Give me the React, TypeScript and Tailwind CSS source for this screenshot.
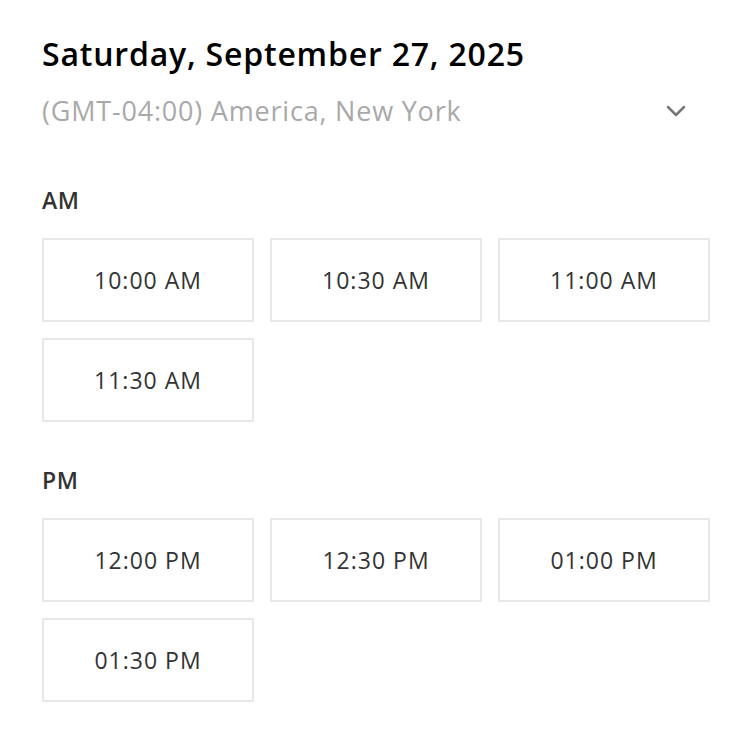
import React from "react";

const am = ["10:00 AM", "10:30 AM", "11:00 AM", "11:30 AM"];
const pm = ["12:00 PM", "12:30 PM", "01:00 PM", "01:30 PM"];

function Slots({ label, items }: { label: string; items: string[] }) {
  return (
    <div className="flex flex-col">
      <div className="text-[23px] leading-[28px] font-semibold tracking-[0.5px] text-[#333333] h-[28px]">{label}</div>
      <div className="mt-[24px] grid grid-cols-[212px_212px_212px] gap-[16px]">
        {items.map((t) => (
          <button
            key={t}
            className="h-[84px] border-2 border-[#e8e8e8] bg-white flex items-center justify-center text-[23px] tracking-[1px] text-[#333333]"
          >
            {t}
          </button>
        ))}
      </div>
    </div>
  );
}

export default function App() {
  return (
    <div
      className="w-[756px] h-[748px] bg-white pl-[42px] pr-[46px] pt-[34px]"
      style={{ fontFamily: "'Open Sans', sans-serif" }}
    >
      <h1 className="text-[32px] leading-[40px] font-semibold tracking-[0.8px] text-black">Saturday, September 27, 2025</h1>
      <div className="mt-[21px] flex items-center justify-between">
        <span className="text-[27px] leading-[32px] tracking-[0.8px] text-[#a9a9a9]">(GMT-04:00) America, New York</span>
        <svg width="22" height="14" viewBox="0 0 22 14" className="mr-[23px]">
          <path d="M3 3 L11 11 L19 3" fill="none" stroke="#777" strokeWidth="2.5" strokeLinecap="round" strokeLinejoin="round" />
        </svg>
      </div>
      <div className="mt-[59px]">
        <Slots label="AM" items={am} />
      </div>
      <div className="mt-[44px]">
        <Slots label="PM" items={pm} />
      </div>
    </div>
  );
}
